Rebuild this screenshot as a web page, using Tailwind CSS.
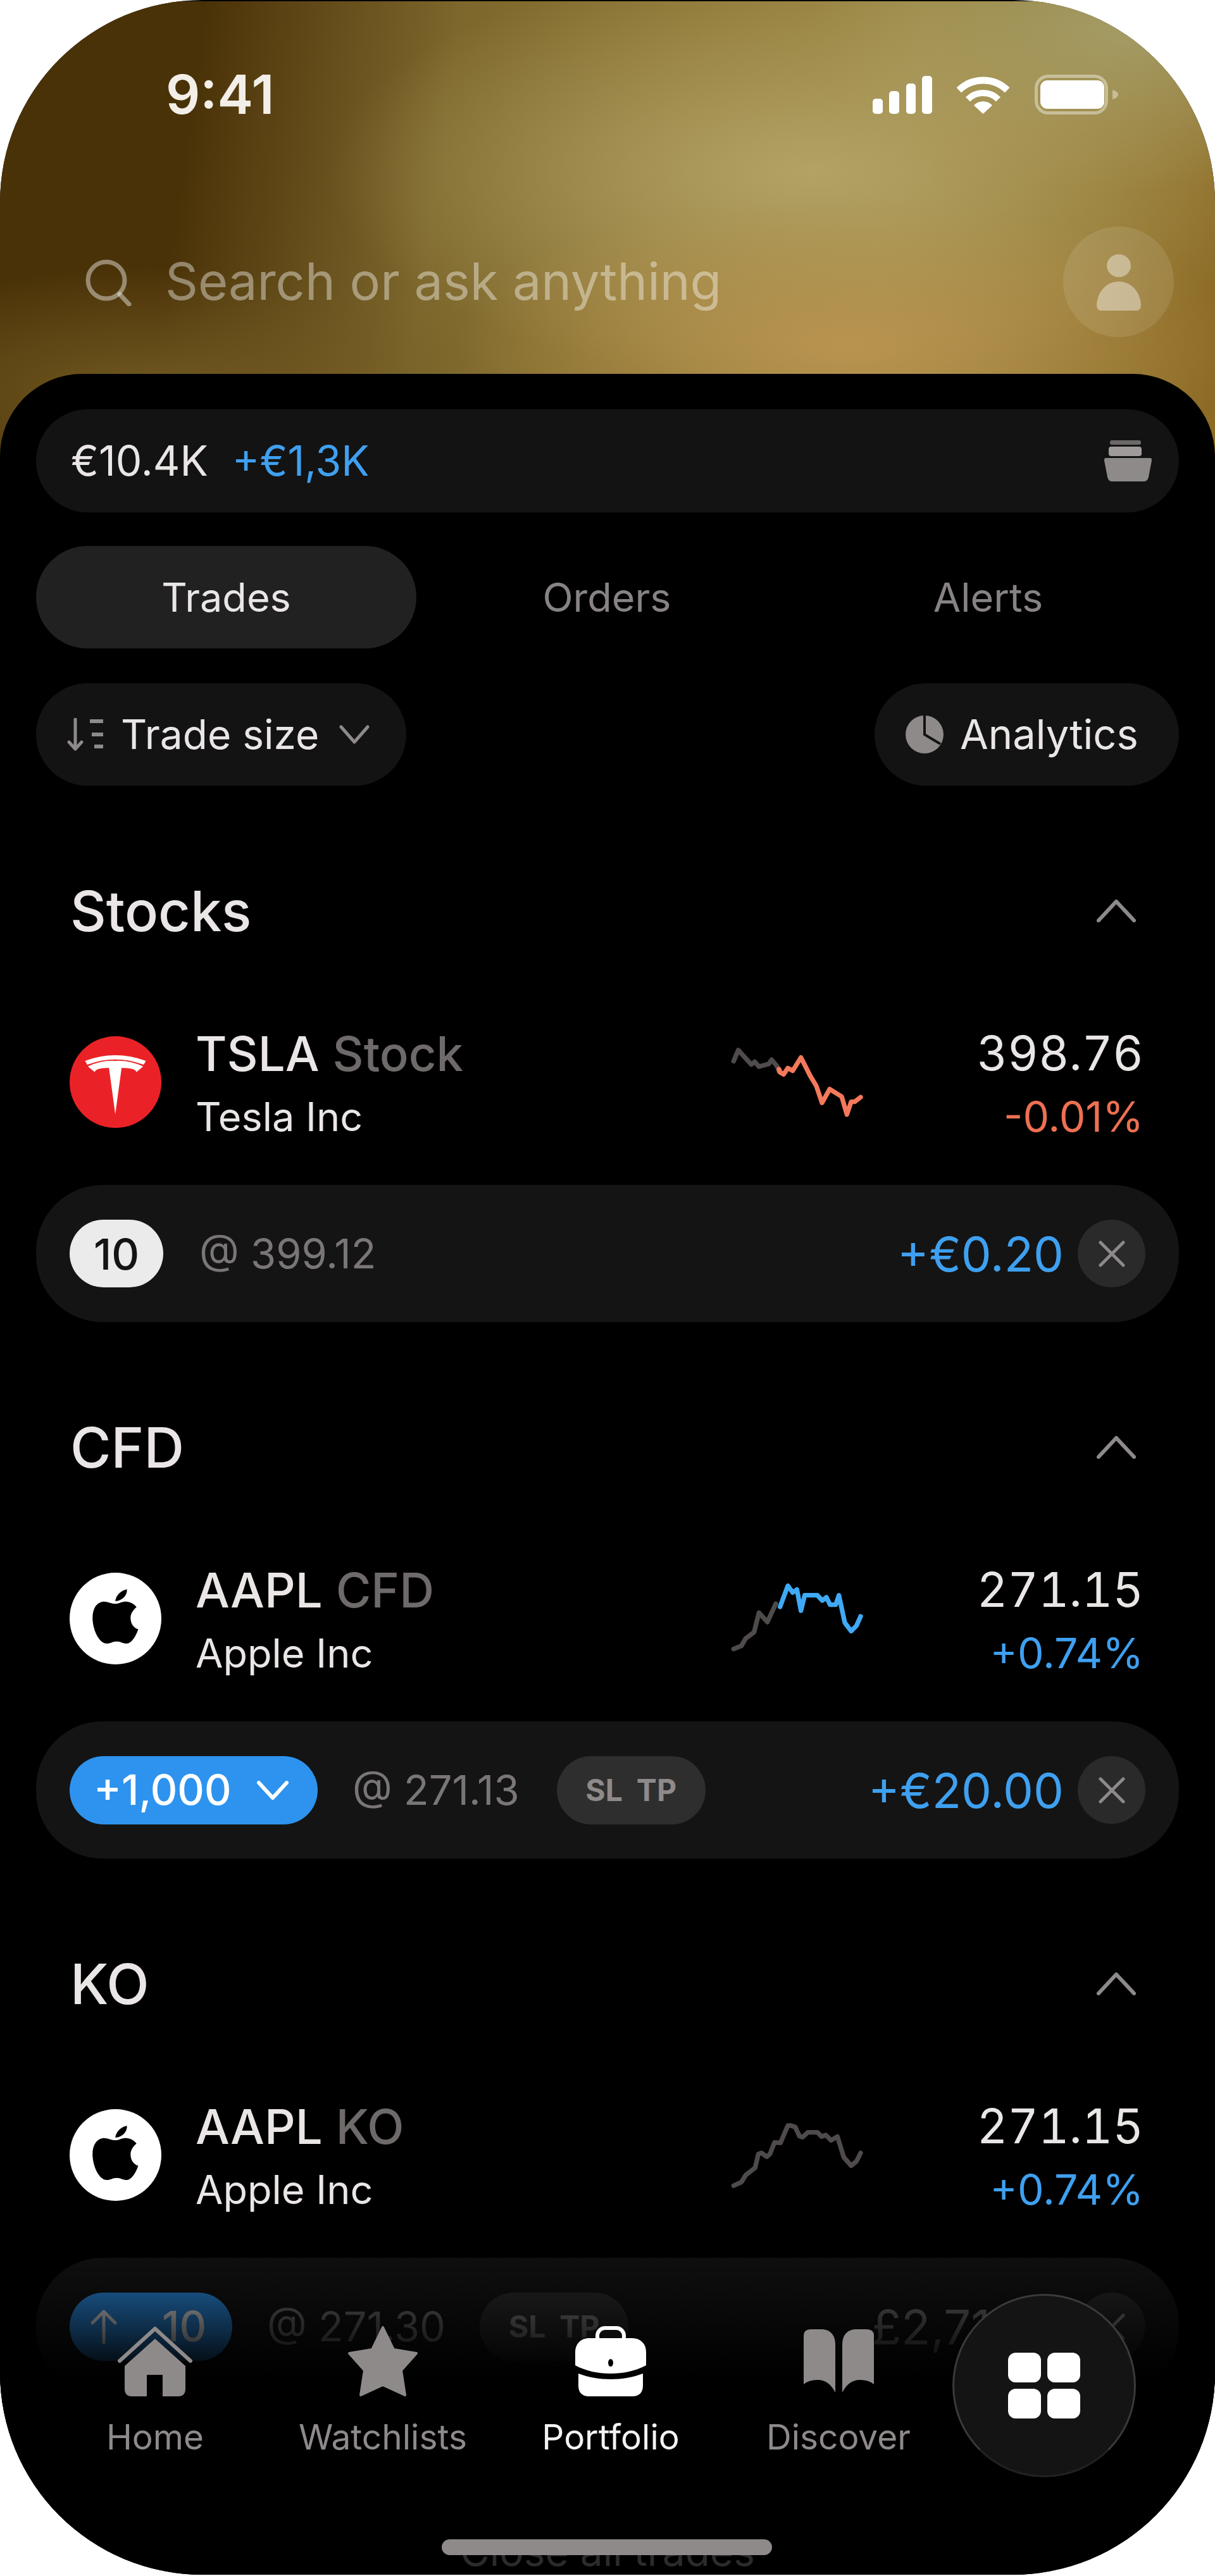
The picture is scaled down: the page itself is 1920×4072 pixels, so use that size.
<!doctype html>
<html><head><meta charset="utf-8"><script src="https://cdn.jsdelivr.net/npm/@tailwindcss/browser@4"></script></head>
<body class="bg-white">
<div class="relative w-[1920px] h-[4070px] overflow-hidden rounded-[320px] bg-black font-['Inter',sans-serif] text-[#e9e6e5]">
  <header class="h-[760px] mt-[2px] pt-[116px] bg-[radial-gradient(ellipse_620px_230px_at_1340px_540px,#b8934f,transparent),radial-gradient(ellipse_760px_330px_at_1280px_270px,#b2a265,transparent),radial-gradient(ellipse_500px_260px_at_1780px_40px,#a39c66,transparent),radial-gradient(ellipse_560px_200px_at_250px_620px,#725a22,transparent),linear-gradient(98deg,#4a3208_0%,#4a3208_16%,#7d672c_36%,#8e7736_55%,#9a8540_72%,#8c6a24_100%)]">
    <div class="flex h-[63px] items-center justify-between pl-[262px] pr-[153px]">
      <span class="text-[85px] font-semibold leading-none text-[#f3efe8]">9:41</span>
      <div class="flex items-center">
        <svg class="w-[94px] h-[60px]" viewBox="0 0 94 60" fill="#fff"><rect x="0" y="36" width="16" height="24" rx="5"/><rect x="26" y="24" width="16" height="36" rx="5"/><rect x="53" y="12" width="15" height="48" rx="5"/><rect x="78" y="0" width="16" height="60" rx="5"/></svg>
        <svg class="ml-[39px] w-[83px] h-[60px]" viewBox="0 0 83 60" fill="none" stroke="#fff"><path d="M3.3 22.5A55 55 0 0 1 79.7 22.5" stroke-width="11"/><path d="M17.5 37A34 34 0 0 1 65.5 37" stroke-width="10"/><path d="M41.5 60L27 46.4A20 20 0 0 1 56 46.4Z" fill="#fff" stroke="none"/></svg>
        <svg class="ml-[40px] w-[132px] h-[63px]" viewBox="0 0 132 63" fill="none"><rect x="2.5" y="2.5" width="111" height="58" rx="19" stroke="#fff" stroke-opacity=".4" stroke-width="5"/><rect x="9" y="9" width="101" height="45" rx="11" fill="#fff"/><path d="M123 24C129 26 132 28 132 31C132 35 129 37 123 39Z" fill="#fff" fill-opacity=".4"/></svg>
      </div>
    </div>
    <div class="mt-[177px] flex h-[175px] items-center pl-[135px] pr-[65px]">
      <svg class="w-[74px] h-[74px] mt-[2px]" viewBox="0 0 74 74" fill="none" stroke="#fff" stroke-opacity=".42" stroke-width="7" stroke-linecap="round"><circle cx="33" cy="33" r="29"/><path d="M54 55L69 71"/></svg>
      <span class="ml-[52px] text-[81px] leading-none text-white/40">Search or ask anything</span>
      <div class="ml-auto flex h-[175px] w-[175px] items-center justify-center rounded-full bg-white/10">
        <svg class="w-[70px] h-[90px]" viewBox="0 0 70 90" fill="#fff" fill-opacity=".4"><ellipse cx="35" cy="19" rx="19" ry="18"/><path d="M0 80C2 58 17 44 35 44C53 44 68 58 70 80C70 87 67 90 63 90H7C3 90 0 87 0 80Z"/></svg>
      </div>
    </div>
  </header>

  <main class="relative mt-[-171px] h-[3479px] overflow-hidden rounded-t-[130px] bg-black pt-[56px]">
    <div class="mx-[57px] flex h-[163px] items-center rounded-full bg-[#131313] pl-[55px] pr-[43px] text-[66px]">
      <span>€10.4K</span><span class="ml-[38px] text-[#3fa0f0]">+€1,3K</span>
      <svg class="ml-auto w-[75px] h-[65px]" viewBox="0 0 75 65" fill="#8f8a8a"><rect x="9" y="0" width="49" height="7" rx="3" fill="#6d6969"/><rect x="7" y="10" width="52" height="15" rx="4" fill="#a09b9b"/><path d="M3 28H72C75 28 75 30 75 32L70 58C69 62 67 65 63 65H12C8 65 6 62 5 58L0 32C0 30 0 28 3 28Z"/></svg>
    </div>

    <div class="mx-[57px] mt-[53px] flex h-[162px] text-[63px] text-[#888383]">
      <div class="flex w-[601px] items-center justify-center rounded-full bg-[#222122] text-[#e9e6e5]">Trades</div>
      <div class="flex w-[602px] items-center justify-center">Orders</div>
      <div class="flex w-[603px] items-center justify-center">Alerts</div>
    </div>

    <div class="mx-[57px] mt-[55px] flex h-[162px] justify-between text-[64px]">
      <div class="flex w-[585px] items-center rounded-full bg-[#131313] pl-[49px]">
        <svg class="w-[59px] h-[52px]" viewBox="0 0 59 52" fill="none" stroke="#8f8a8a" stroke-width="5" stroke-linecap="round" stroke-linejoin="round"><path d="M13 2V49M3 38L13 49L23 38"/><path d="M36 5H57M39 26H57" stroke-linecap="butt" stroke-width="6"/><path d="M43 45H57" stroke-linecap="butt" stroke-width="6"/></svg>
        <span class="ml-[26px]">Trade size</span>
        <svg class="ml-[32px] w-[48px] h-[30px]" viewBox="0 0 48 30" fill="none" stroke="#8f8a8a" stroke-width="5" stroke-linecap="round" stroke-linejoin="round"><path d="M3 3L24 27L45 3"/></svg>
      </div>
      <div class="flex w-[481px] items-center rounded-full bg-[#131313] pl-[48px] text-[65px]">
        <svg class="w-[62px] h-[62px]" viewBox="0 0 62 62" fill="#8f8a8a"><circle cx="31" cy="31" r="30"/><path d="M31 0V31L56 46" fill="none" stroke="#131313" stroke-width="4"/></svg>
        <span class="ml-[25px]">Analytics</span>
      </div>
    </div>

    <section class="mt-[148px]">
      <div class="flex h-[100px] items-center justify-between pl-[111px] pr-[125px] text-[88px] font-medium">
        <span>Stocks</span>
        <svg class="w-[62px] h-[36px]" viewBox="0 0 62 36" fill="none" stroke="#8f8a8a" stroke-width="6" stroke-linecap="round" stroke-linejoin="round"><path d="M3 33L31 3L59 33"/></svg>
      </div>
      <div class="mt-[125px] flex h-[200px] items-start pl-[110px] pr-[113px]">
        <div class="mt-[23px] flex h-[145px] w-[145px] shrink-0 items-center justify-center rounded-full bg-[#ea2227]">
          <svg class="w-[145px] h-[145px]" viewBox="150 55 432 435" fill="#fff"><path d="M222 172Q365 118 510 172L500 190Q365 140 232 190Z"/><path d="M235 198Q300 168 365 172Q430 168 497 198L465 225Q460 205 395 205L365 425L335 205Q272 205 268 225Z"/></svg>
        </div>
        <div class="ml-[54px] w-[791px]">
          <div class="flex h-[100px] items-center text-[76px] font-medium"><span>TSLA</span><span class="ml-[21px] text-[#6e6a6a]">Stock</span></div>
          <div class="flex h-[100px] items-center text-[63px]">Tesla Inc</div>
        </div>
        <svg class="mt-[-15px] w-[300px] h-[200px] shrink-0" viewBox="0 0 900 600" fill="none" stroke-width="22" stroke-linecap="round" stroke-linejoin="round"><polyline stroke="#4f4b4b" points="178,232 200,180 262,248 278,235 298,258 345,245 358,225 385,258 392,280"/><polyline stroke="#f4795b" points="393,270 398,285 415,295 435,265 458,278 497,215 540,300 570,350 597,430 633,365 690,400 715,485 735,425 752,425 780,403"/></svg>
        <div class="flex-1 text-right">
          <div class="flex h-[100px] items-center justify-end text-[75px] tabular-nums">398.76</div>
          <div class="flex h-[100px] items-center justify-end text-[66px] text-[#ee7052]">-0.01%</div>
        </div>
      </div>
      <div class="mx-[57px] mt-[58px] flex h-[217px] items-center rounded-[105px] bg-[#141414] pl-[53px] pr-[53px]">
        <div class="flex h-[107px] w-[148px] items-center justify-center rounded-full bg-[#ebebeb] text-[68px] font-medium text-[#141414]">10</div>
        <span class="ml-[57px] text-[65px] text-[#7b7676]">@ 399.12</span>
        <span class="ml-auto text-[76px] text-[#3fa0f0]">+€0.20</span>
        <div class="ml-[22px] flex h-[107px] w-[107px] items-center justify-center rounded-full bg-[#2a2a2a]">
          <svg class="w-[42px] h-[42px]" viewBox="0 0 42 42" stroke="#8f8a8a" stroke-width="5" stroke-linecap="round"><path d="M3 3L39 39M39 3L3 39"/></svg>
        </div>
      </div>
    </section>

    <section class="mt-[148px]">
      <div class="flex h-[100px] items-center justify-between pl-[111px] pr-[125px] text-[88px] font-medium">
        <span>CFD</span>
        <svg class="w-[62px] h-[36px]" viewBox="0 0 62 36" fill="none" stroke="#8f8a8a" stroke-width="6" stroke-linecap="round" stroke-linejoin="round"><path d="M3 33L31 3L59 33"/></svg>
      </div>
      <div class="mt-[125px] flex h-[200px] items-start pl-[110px] pr-[113px]">
        <div class="mt-[23px] flex h-[145px] w-[145px] shrink-0 items-center justify-center rounded-full bg-white">
          <svg class="w-[145px] h-[145px]" viewBox="150 138 432 432" fill="#000"><path d="M365 285C345 285 325 272 305 275C275 280 258 310 258 350C258 400 285 470 325 472C345 472 350 462 372 462C392 462 398 472 420 472C445 470 465 430 473 405C445 395 437 370 437 350C437 330 450 312 465 300C450 280 425 273 405 275C390 277 378 285 365 285Z"/><path d="M365 272C368 245 390 222 420 216C422 245 398 270 365 272Z"/></svg>
        </div>
        <div class="ml-[54px] w-[791px]">
          <div class="flex h-[100px] items-center text-[76px] font-medium"><span>AAPL</span><span class="ml-[21px] text-[#6e6a6a]">CFD</span></div>
          <div class="flex h-[100px] items-center text-[63px]">Apple Inc</div>
        </div>
        <svg class="mt-[-23px] w-[300px] h-[200px] shrink-0" viewBox="0 0 900 600" fill="none" stroke-width="22" stroke-linecap="round" stroke-linejoin="round"><polyline stroke="#4f4b4b" points="178,500 215,485 235,450 275,420 298,328 338,372 378,285"/><polyline stroke="#3fa9f5" points="398,300 435,200 458,232 478,218 497,318 515,245 575,245 598,270 618,255 635,290 662,290 677,245 705,375 735,415 760,390 780,345"/></svg>
        <div class="flex-1 text-right">
          <div class="flex h-[100px] items-center justify-end text-[75px] tabular-nums">271.15</div>
          <div class="flex h-[100px] items-center justify-end text-[66px] text-[#3fa0f0]">+0.74%</div>
        </div>
      </div>
      <div class="mx-[57px] mt-[58px] flex h-[217px] items-center rounded-[105px] bg-[#141414] pl-[53px] pr-[53px]">
        <div class="flex h-[108px] w-[392px] items-center rounded-full bg-[#2d93ee] pl-[38px] text-[66px] font-medium text-white">
          <span>+1,000</span>
          <svg class="ml-[40px] w-[50px] h-[30px]" viewBox="0 0 50 30" fill="none" stroke="#fff" stroke-width="6" stroke-linecap="round" stroke-linejoin="round"><path d="M3 3L25 27L47 3"/></svg>
        </div>
        <span class="ml-[55px] text-[65px] text-[#7b7676]">@ 271.13</span>
        <div class="ml-[59px] flex h-[108px] w-[235px] items-center justify-center gap-[22px] rounded-full bg-[#2e2e2e] text-[48px] font-bold text-[#8f8a8a]"><span>SL</span><span>TP</span></div>
        <span class="ml-auto text-[76px] text-[#3fa0f0]">+€20.00</span>
        <div class="ml-[22px] flex h-[107px] w-[107px] items-center justify-center rounded-full bg-[#2a2a2a]">
          <svg class="w-[42px] h-[42px]" viewBox="0 0 42 42" stroke="#8f8a8a" stroke-width="5" stroke-linecap="round"><path d="M3 3L39 39M39 3L3 39"/></svg>
        </div>
      </div>
    </section>

    <section class="mt-[148px]">
      <div class="flex h-[100px] items-center justify-between pl-[111px] pr-[125px] text-[88px] font-medium">
        <span>KO</span>
        <svg class="w-[62px] h-[36px]" viewBox="0 0 62 36" fill="none" stroke="#8f8a8a" stroke-width="6" stroke-linecap="round" stroke-linejoin="round"><path d="M3 33L31 3L59 33"/></svg>
      </div>
      <div class="mt-[125px] flex h-[200px] items-start pl-[110px] pr-[113px]">
        <div class="mt-[23px] flex h-[145px] w-[145px] shrink-0 items-center justify-center rounded-full bg-white">
          <svg class="w-[145px] h-[145px]" viewBox="150 138 432 432" fill="#000"><path d="M365 285C345 285 325 272 305 275C275 280 258 310 258 350C258 400 285 470 325 472C345 472 350 462 372 462C392 462 398 472 420 472C445 470 465 430 473 405C445 395 437 370 437 350C437 330 450 312 465 300C450 280 425 273 405 275C390 277 378 285 365 285Z"/><path d="M365 272C368 245 390 222 420 216C422 245 398 270 365 272Z"/></svg>
        </div>
        <div class="ml-[54px] w-[791px]">
          <div class="flex h-[100px] items-center text-[76px] font-medium"><span>AAPL</span><span class="ml-[21px] text-[#6e6a6a]">KO</span></div>
          <div class="flex h-[100px] items-center text-[63px]">Apple Inc</div>
        </div>
        <svg class="mt-[-21px] w-[300px] h-[200px] shrink-0" viewBox="0 0 900 600" fill="none" stroke="#4f4b4b" stroke-width="22" stroke-linecap="round" stroke-linejoin="round"><polyline points="178,495 215,478 235,445 280,410 295,345 310,340 335,358 350,345 372,290 400,292 435,210 450,210 470,217 490,260 505,265 530,242 575,242 595,262 615,255 640,280 670,262 700,360 735,400 760,380 780,340"/></svg>
        <div class="flex-1 text-right">
          <div class="flex h-[100px] items-center justify-end text-[75px] tabular-nums">271.15</div>
          <div class="flex h-[100px] items-center justify-end text-[66px] text-[#3fa0f0]">+0.74%</div>
        </div>
      </div>
      <div class="mx-[57px] mt-[58px] flex h-[217px] items-center rounded-[105px] bg-[#141414] pl-[53px] pr-[53px]">
        <div class="flex h-[108px] w-[257px] items-center rounded-full bg-[#2d93ee] pl-[33px] text-[66px] font-medium text-white">
          <svg class="w-[42px] h-[54px]" viewBox="0 0 42 54" fill="none" stroke="#fff" stroke-width="5" stroke-linecap="round" stroke-linejoin="round"><path d="M21 52V3M3 21L21 3L39 21"/></svg>
          <span class="ml-[71px]">10</span>
        </div>
        <span class="ml-[55px] text-[65px] text-[#7b7676]">@ 271.30</span>
        <div class="ml-[54px] flex h-[108px] w-[235px] items-center justify-center gap-[22px] rounded-full bg-[#2e2e2e] text-[48px] font-bold text-[#8f8a8a]"><span>SL</span><span>TP</span></div>
        <span class="ml-auto text-[76px] text-[#7b7676]">£2,71.00</span>
        <div class="ml-[22px] flex h-[107px] w-[107px] items-center justify-center rounded-full bg-[#2a2a2a]">
          <svg class="w-[42px] h-[42px]" viewBox="0 0 42 42" stroke="#8f8a8a" stroke-width="5" stroke-linecap="round"><path d="M3 3L39 39M39 3L3 39"/></svg>
        </div>
      </div>
      <div class="mt-[203px] text-center text-[64px] leading-[88px] text-[#2c2a2a]">Close all trades</div>
    </section>
  </main>

  <div class="absolute inset-x-0 bottom-[31px] h-[539px] bg-[linear-gradient(to_bottom,transparent,#000_48%)]"></div>

  <nav class="absolute left-[65px] top-[3677px] flex">
    <div class="flex w-[360px] flex-col items-center text-[#8f8a8a]">
      <svg class="w-[118px] h-[111px]" viewBox="0 0 118 111" fill="#8f8a8a"><path d="M3 55L59 4L115 55" fill="none" stroke="#8f8a8a" stroke-width="6" stroke-linecap="round" stroke-linejoin="round"/><path fill-rule="evenodd" d="M59 20L107 63V99C107 107 103 111 96 111H22C15 111 11 107 11 99V63ZM46 77V111H71V77Z"/></svg>
      <span class="mt-[26px] text-[55px] leading-[76px]">Home</span>
    </div>
    <div class="flex w-[360px] flex-col items-center text-[#8f8a8a]">
      <svg class="w-[118px] h-[111px]" viewBox="-4 0 118 111" fill="#8f8a8a" stroke="#8f8a8a" stroke-width="4" stroke-linejoin="round"><path d="M55 2L72 37L108 43L84 70L90 109L55 93L20 109L26 70L2 43L38 37Z"/></svg>
      <span class="mt-[26px] text-[55px] leading-[76px]">Watchlists</span>
    </div>
    <div class="flex w-[360px] flex-col items-center text-[#f5f3f2]">
      <svg class="w-[112px] h-[111px]" viewBox="0 0 112 111" fill="#fff"><rect x="35" y="3" width="42" height="26" rx="12" fill="none" stroke="#fff" stroke-width="6"/><path d="M22 19H90C103 19 112 28 112 41V62C95 71 76 75 56 75C36 75 17 71 0 62V41C0 28 9 19 22 19Z"/><path d="M5 75C21 81 38 84 56 84C74 84 91 81 107 75V94C107 105 101 111 90 111H22C11 111 5 105 5 94Z"/><ellipse cx="56" cy="58" rx="4" ry="6" fill="#000"/></svg>
      <span class="mt-[26px] text-[55px] leading-[76px]">Portfolio</span>
    </div>
    <div class="flex w-[360px] flex-col items-center text-[#8f8a8a]">
      <svg class="w-[111px] h-[111px]" viewBox="0 -5 111 111" fill="#8f8a8a"><path d="M0 10Q0 0 12 0H30Q50 2 50 25V100Q40 80 22 80Q8 80 0 87Z"/><path d="M111 10Q111 0 99 0H81Q61 2 61 25V100Q71 80 89 80Q103 80 111 87Z"/></svg>
      <span class="mt-[26px] text-[55px] leading-[76px]">Discover</span>
    </div>
  </nav>

  <div class="absolute left-[1505px] top-[3626px] flex h-[290px] w-[290px] items-center justify-center rounded-full border-[3px] border-[#3a3a3a] border-b-[#222] bg-[#141414]">
    <div class="grid grid-cols-[52px_52px] grid-rows-[47px_47px] gap-[10px]">
      <div class="rounded-[12px] bg-white"></div><div class="rounded-[12px] bg-white"></div><div class="rounded-[12px] bg-white"></div><div class="rounded-[12px] bg-white"></div>
    </div>
  </div>

  <div class="absolute left-[698px] top-[4014px] h-[25px] w-[522px] rounded-full bg-[#8f8a8a]"></div>
</div>
</body></html>
